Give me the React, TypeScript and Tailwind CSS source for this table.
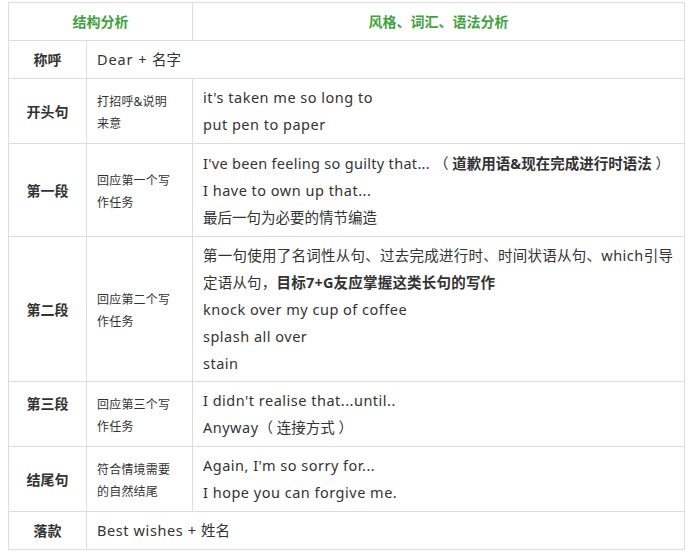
const cjk = "font-['Noto_Sans','Noto_Sans_CJK_SC',sans-serif]"

// latin runs in the reference are a bit wider than Noto Sans
const L = ({ children }: { children: React.ReactNode }) => (
  <span className="tracking-[0.5px]">{children}</span>
)

type Row = {
  label: string
  h: string
  labelCls?: string
  task?: string[]
  lines?: React.ReactNode[]
  span?: React.ReactNode
}

const rows: Row[] = [
  {
    label: "称呼",
    h: "h-[38px]",
    span: (
      <>
        <span className="tracking-[0.9px]">Dear + </span>名字
      </>
    ),
  },
  {
    label: "开头句",
    h: "h-[65px]",
    task: ["打招呼&说明", "来意"],
    lines: [<L>it's taken me so long to</L>, <L>put pen to paper</L>],
  },
  {
    label: "第一段",
    h: "h-[93px]",
    task: ["回应第一个写", "作任务"],
    lines: [
      <>
        <span className="tracking-[0.3px]">I've been feeling so guilty that... </span>（{" "}
        <b className="font-bold">道歉用语&现在完成进行时语法</b> ）
      </>,
      <L>I have to own up that...</L>,
      "最后一句为必要的情节编造",
    ],
  },
  {
    label: "第二段",
    h: "h-[145px]",
    task: ["回应第二个写", "作任务"],
    lines: [
      <span className="tracking-[0.25px]">
        第一句使用了名词性从句、过去完成进行时、时间状语从句、<L>which</L>引导
      </span>,
      <span className="tracking-[0.2px]">
        定语从句，<b className="font-bold">目标7+G友应掌握这类长句的写作</b>
      </span>,
      <L>knock over my cup of coffee</L>,
      <L>splash all over</L>,
      <L>stain</L>,
    ],
  },
  {
    label: "第三段",
    h: "h-[65px]",
    labelCls: "pb-[21px]",
    task: ["回应第三个写", "作任务"],
    lines: [<L>I didn't realise that...until..</L>, <><L>Anyway</L>（ 连接方式 ）</>],
  },
  {
    label: "结尾句",
    h: "h-[65px]",
    task: ["符合情境需要", "的自然结尾"],
    lines: [<L>Again, I'm so sorry for...</L>, <L>I hope you can forgive me.</L>],
  },
  {
    label: "落款",
    h: "h-[38px]",
    span: (
      <>
        <span className="tracking-[0.6px]">Best wishes + </span>姓名
      </>
    ),
  },
]

export default function App() {
  return (
    <div className={`w-[689px] h-[555px] bg-white pt-[2px] pl-[8px] text-[#333] ${cjk}`}>
      <table className="w-[677px] border-collapse table-fixed">
        <colgroup>
          <col className="w-[78px]" />
          <col className="w-[106px]" />
          <col />
        </colgroup>
        <tbody>
          <tr className="h-[38px]">
            <td colSpan={2} className="border border-[#dcdcdc] text-center align-middle text-[14px] font-bold text-[#42a240]">
              结构分析
            </td>
            <td className="border border-[#dcdcdc] text-center align-middle text-[14px] font-bold text-[#42a240]">
              风格、词汇、语法分析
            </td>
          </tr>
          {rows.map((r) => (
            <tr key={r.label} className={r.h}>
              <td className={`border border-[#dcdcdc] text-center align-middle text-[14px] font-bold ${r.labelCls ?? ""}`}>
                {r.label}
              </td>
              {r.span ? (
                <td colSpan={2} className="border border-[#dcdcdc] align-middle px-[10px] text-[14.5px]">
                  {r.span}
                </td>
              ) : (
                <>
                  <td className="border border-[#dcdcdc] align-middle px-[10px] text-[12px] leading-[22px] pt-[3px] tracking-[0.2px]">
                    {r.task?.map((t) => (
                      <div key={t}>{t}</div>
                    ))}
                  </td>
                  <td className="border border-[#dcdcdc] align-middle px-[10px] text-[14.5px] leading-[27px]">
                    {r.lines?.map((l, i) => (
                      <div key={i} className="whitespace-nowrap">
                        {l}
                      </div>
                    ))}
                  </td>
                </>
              )}
            </tr>
          ))}
        </tbody>
      </table>
    </div>
  )
}
